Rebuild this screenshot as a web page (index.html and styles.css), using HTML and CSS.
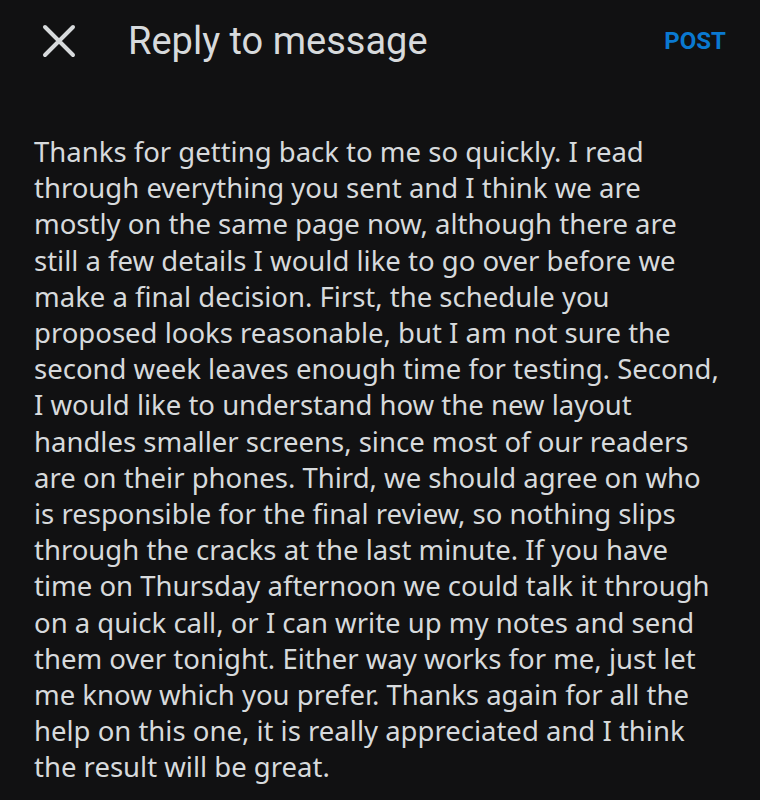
FILE: index.html
```html
<!DOCTYPE html>
<html lang="en">
<head>
    <meta charset="UTF-8">
    <meta name="viewport" content="width=device-width, initial-scale=1.0">
    <title>Reply to message</title>
    <link rel="stylesheet" href="styles.css">
</head>
<body>
    <header class="top-bar">
        <button class="close-btn" aria-label="Close">
            <svg width="34" height="34" viewBox="0 0 34 34">
                <path d="M3 3 L31 31 M31 3 L3 31" stroke="#d7dadc" stroke-width="4" stroke-linecap="round" fill="none"/>
            </svg>
        </button>
        <h1 class="title">Reply to message</h1>
        <a href="#" class="post-link">POST</a>
    </header>

    <main class="composer">
        <p class="reply-text">Thanks for getting back to me so quickly. I read through everything you sent and I think we are mostly on the same page now, although there are still a few details I would like to go over before we make a final decision. First, the schedule you proposed looks reasonable, but I am not sure the second week leaves enough time for testing. Second, I would like to understand how the new layout handles smaller screens, since most of our readers are on their phones. Third, we should agree on who is responsible for the final review, so nothing slips through the cracks at the last minute. If you have time on Thursday afternoon we could talk it through on a quick call, or I can write up my notes and send them over tonight. Either way works for me, just let me know which you prefer. Thanks again for all the help on this one, it is really appreciated and I think the result will be great.</p>
    </main>
</body>
</html>
```

FILE: styles.css
```css
/* General styles */
body {
    margin: 0;
    padding: 0;
    background-color: #111112;
    color: #d7dadc;
    font-family: "Noto Sans", "Open Sans", sans-serif;
}

/* Header styles */
.top-bar {
    display: flex;
    align-items: center;
    height: 82px;
    padding: 0 34px 0 42px;
}

.close-btn {
    background: none;
    border: none;
    padding: 0;
    width: 34px;
    height: 34px;
    margin-right: 52px;
    cursor: pointer;
}

.title {
    flex: 1;
    margin: 0;
    font-family: Roboto, "Noto Sans", sans-serif;
    font-size: 38px;
    font-weight: 400;
    color: #d7dadc;
}

.post-link {
    color: #0a79d1;
    font-family: Roboto, sans-serif;
    font-weight: bold;
    font-size: 24px;
    text-decoration: none;
}

/* Reply body */
.composer {
    padding: 52px 34px 0 34px;
}

.reply-text {
    margin: 0;
    font-size: 27.5px;
    line-height: 36.2px;
}
```
